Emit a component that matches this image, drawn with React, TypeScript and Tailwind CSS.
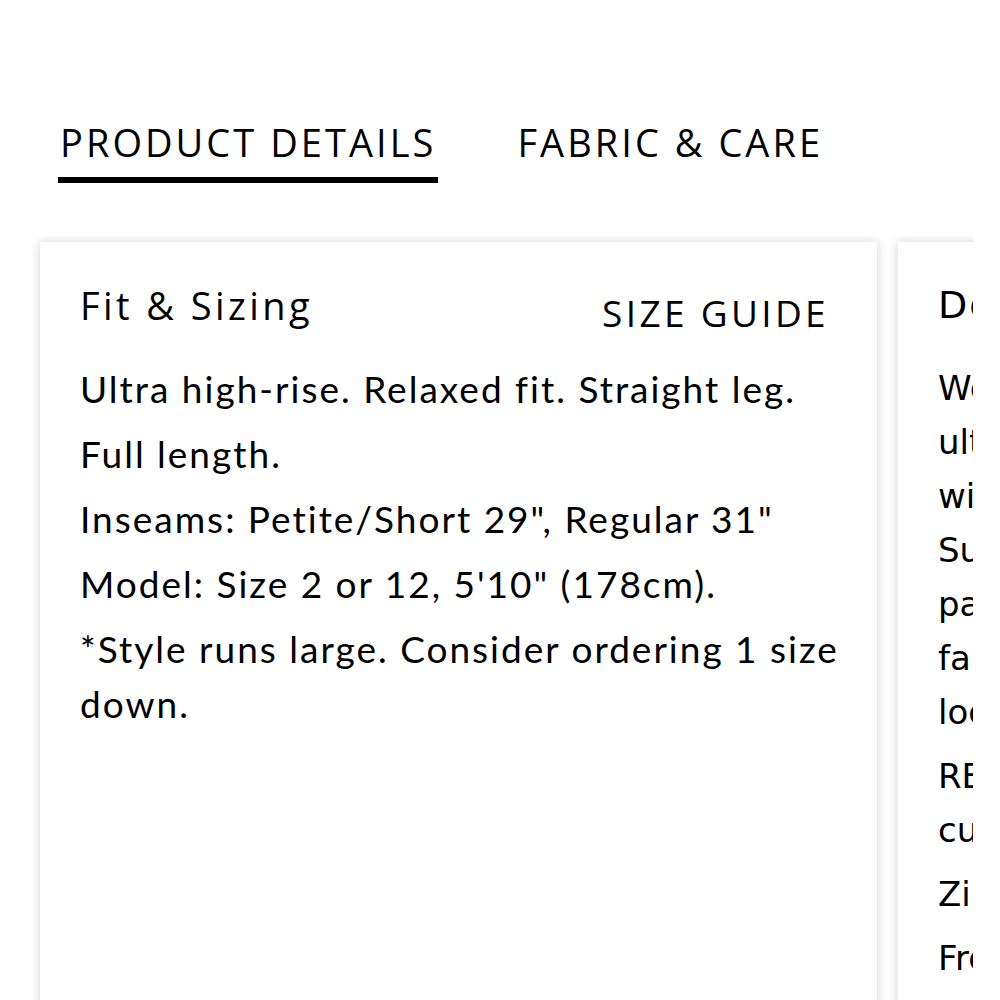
import React, { useState } from 'react';

const tabs = ['PRODUCT DETAILS', 'FABRIC & CARE'];

const fitLines = [
  'Ultra high-rise. Relaxed fit. Straight leg.',
  'Full length.',
  'Inseams: Petite/Short 29", Regular 31"',
  'Model: Size 2 or 12, 5\'10" (178cm).',
  '*Style runs large. Consider ordering 1 size down.',
];

const detailParas = [
  ['We made this', 'ultra high-rise', 'wide leg from', 'Superstretch', 'pant fabric for', 'fabulous stretch', 'look and feel.'],
  ['REMADE with', 'cut scraps.'],
  ['Zip fly.'],
  ['Front pockets.'],
];

const App: React.FC = () => {
  const [active, setActive] = useState(0);

  return (
    <div className="w-[1000px] h-[1000px] overflow-hidden bg-white text-black">
      {/* Tabs */}
      <div className="flex gap-[77px] pl-[58px] pt-[117px]">
        {tabs.map((t, i) => (
          <button
            key={t}
            onClick={() => setActive(i)}
            className="flex flex-col items-start"
            style={{ fontFamily: '"Open Sans", sans-serif' }}
          >
            <span className="text-[38px] leading-[50px] tracking-[0.08em] px-[2px]">{t}</span>
            <span className={`mt-[10px] h-[6px] w-full ${active === i ? 'bg-black' : 'bg-transparent'}`} />
          </button>
        ))}
      </div>

      {/* Cards scroller */}
      <div className="mt-[53px] ml-[30px] w-[943px] overflow-hidden pl-[10px] pt-[6px]">
        <div className="flex gap-[21px]">
          <div className="w-[837px] h-[800px] shrink-0 bg-white shadow-[0_0_10px_rgba(0,0,0,0.18)] pl-[40px] pr-[38px] pt-[38px]">
            <div className="flex justify-between items-start" style={{ fontFamily: '"Open Sans", sans-serif' }}>
              <h3 className="text-[38px] leading-[50px] tracking-[0.09em]">Fit &amp; Sizing</h3>
              <button className="text-[37px] leading-[50px] tracking-[0.09em] mt-[8px] mr-[10px]">SIZE GUIDE</button>
            </div>
            <div className="mt-[23px]" style={{ fontFamily: 'Lato, sans-serif' }}>
              {fitLines.map((l) => (
                <p key={l} className="text-[37px] leading-[55px] tracking-[2px] mb-[10px]">{l}</p>
              ))}
            </div>
          </div>

          <div className="w-[837px] h-[800px] shrink-0 bg-white shadow-[0_0_10px_rgba(0,0,0,0.18)] pl-[40px] pt-[38px]">
            <h3 className="text-[38px] leading-[50px] tracking-[0.05em]" style={{ fontFamily: '"DejaVu Sans", sans-serif' }}>Details</h3>
            <div className="mt-[31px]" style={{ fontFamily: '"DejaVu Sans", sans-serif' }}>
              {detailParas.map((p, i) => (
                <p key={i} className="text-[34px] leading-[54px] mb-[10px] whitespace-nowrap">
                  {p.map((l, j) => (
                    <React.Fragment key={j}>
                      {l}
                      {j < p.length - 1 && <br />}
                    </React.Fragment>
                  ))}
                </p>
              ))}
            </div>
          </div>
        </div>
      </div>
    </div>
  );
};

export default App;
